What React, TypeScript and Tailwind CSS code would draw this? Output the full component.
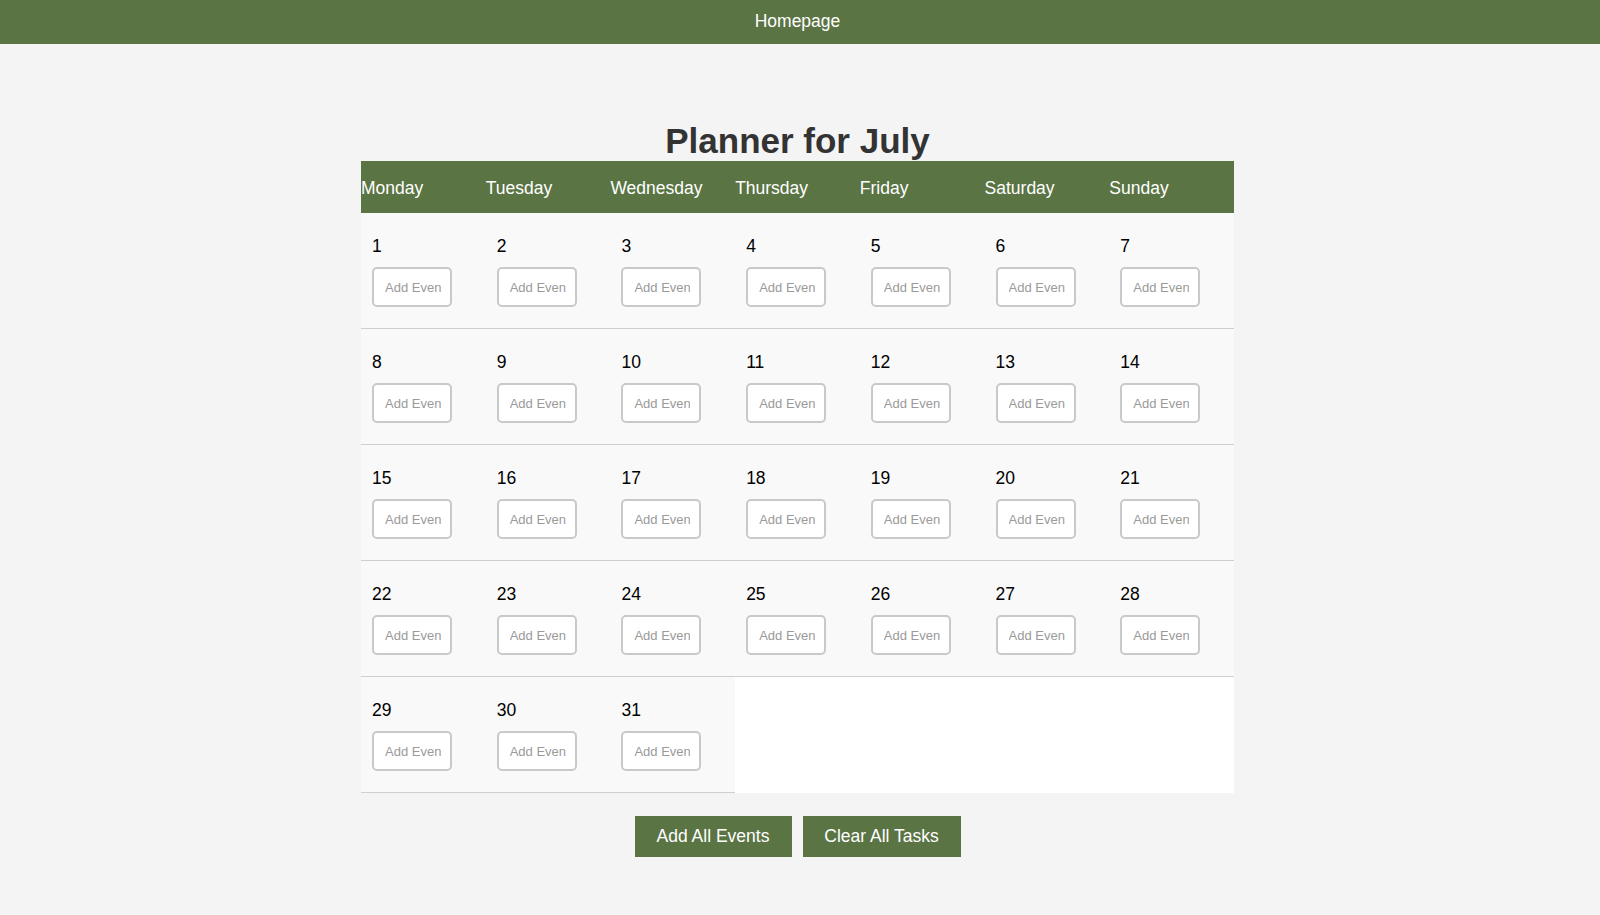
import React from "react";

const days = ["Monday", "Tuesday", "Wednesday", "Thursday", "Friday", "Saturday", "Sunday"];

export default function App() {
  const cells: (number | null)[] = [];
  for (let i = 1; i <= 35; i++) cells.push(i <= 31 ? i : null);

  return (
    <div
      className="min-h-screen bg-[#f4f4f4] text-black"
      style={{ fontFamily: '"Liberation Sans", Arial, Helvetica, sans-serif' }}
    >
      <nav className="h-[44px] bg-[#5a7444] flex items-center justify-center pr-[5px] pb-[2px]">
        <span className="text-white text-[17.5px] leading-[20px]">Homepage</span>
      </nav>

      <main className="pt-[77px] pr-[5px] flex flex-col items-center">
        <h1 className="text-[35px] leading-[40px] font-bold text-[#333333] text-center">Planner for July</h1>

        <div className="w-[873px]">
          <div className="grid grid-cols-7 h-[52px] bg-[#5a7444] items-center">
            {days.map((d) => (
              <div key={d} className="text-white text-[17.5px] leading-[20px] pt-[2px]">
                {d}
              </div>
            ))}
          </div>

          <div className="grid grid-cols-7">
            {cells.map((n, i) =>
              n === null ? (
                <div key={i} className="bg-white" />
              ) : (
                <div
                  key={i}
                  className="bg-[#f9f9f9] border-b border-[#cfcfcf] pt-[23px] pb-[21px] px-[11px] flex flex-col"
                >
                  <div className="text-[17.5px] leading-[20px] text-black">{n}</div>
                  <input
                    type="text"
                    placeholder="Add Event"
                    className="mt-[11px] w-[80px] h-[40px] border-2 border-[#c9c9c9] rounded-[5px] bg-white pl-[11px] pr-[9px] text-[13px] text-black placeholder:text-[#9a9a9a] outline-none"
                    style={{ fontFamily: '"Liberation Sans", Arial, sans-serif' }}
                  />
                </div>
              )
            )}
          </div>
        </div>

        <div className="mt-[23px] flex gap-[11px]">
          <button className="w-[157px] h-[41px] bg-[#5a7444] text-white text-[17.5px] flex items-center justify-center">
            Add All Events
          </button>
          <button className="w-[158px] h-[41px] bg-[#5a7444] text-white text-[17.5px] flex items-center justify-center">
            Clear All Tasks
          </button>
        </div>
      </main>
    </div>
  );
}
